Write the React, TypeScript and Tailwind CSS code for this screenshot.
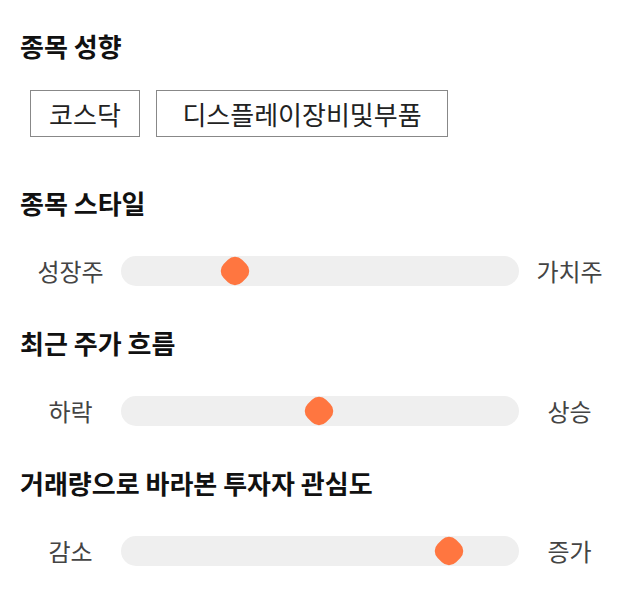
import React from 'react';

const font = { fontFamily: '"Noto Sans CJK KR", "Noto Sans", sans-serif' };

interface SliderRowProps {
  left: string;
  right: string;
  value: number;
}

const SliderRow: React.FC<SliderRowProps> = ({ left, right, value }) => {
  return (
    <div className="flex items-center h-[30px]">
      <div className="w-[101px] text-center text-[24px] text-[#444]">{left}</div>
      <div className="relative flex-1 h-[30px] rounded-full bg-[#efefef]">
        <div
          className="absolute top-1/2 -translate-x-1/2 -translate-y-1/2"
          style={{ left: `${value}%` }}
        >
          <div className="w-[26px] h-[26px] rotate-45 rounded-[10px] bg-[#ff7640]" />
        </div>
      </div>
      <div className="w-[101px] text-center text-[24px] text-[#444]">{right}</div>
    </div>
  );
};

const SectionTitle: React.FC<{ children: React.ReactNode }> = ({ children }) => (
  <h2 className="text-[26px] leading-7 font-bold text-[#111]">{children}</h2>
);

export default function App() {
  return (
    <div className="w-[640px] h-[606px] bg-white px-5 pt-8" style={font}>
      {/* 종목 성향 */}
      <SectionTitle>종목 성향</SectionTitle>
      <div className="flex gap-4 mt-[30px] pl-[10px]">
        <div className="w-[110px] h-[47px] flex items-center justify-center border border-[#888] text-[26px] text-[#222]">
          코스닥
        </div>
        <div className="w-[292px] h-[47px] flex items-center justify-center border border-[#888] text-[26px] text-[#222]">
          디스플레이장비및부품
        </div>
      </div>

      {/* 종목 스타일 */}
      <div className="mt-[52px]">
        <SectionTitle>종목 스타일</SectionTitle>
        <div className="mt-[39px]">
          <SliderRow left="성장주" right="가치주" value={28.6} />
        </div>
      </div>

      {/* 최근 주가 흐름 */}
      <div className="mt-[43px]">
        <SectionTitle>최근 주가 흐름</SectionTitle>
        <div className="mt-[39px]">
          <SliderRow left="하락" right="상승" value={49.7} />
        </div>
      </div>

      {/* 거래량 */}
      <div className="mt-[43px]">
        <SectionTitle>거래량으로 바라본 투자자 관심도</SectionTitle>
        <div className="mt-[39px]">
          <SliderRow left="감소" right="증가" value={82.4} />
        </div>
      </div>
    </div>
  );
}
